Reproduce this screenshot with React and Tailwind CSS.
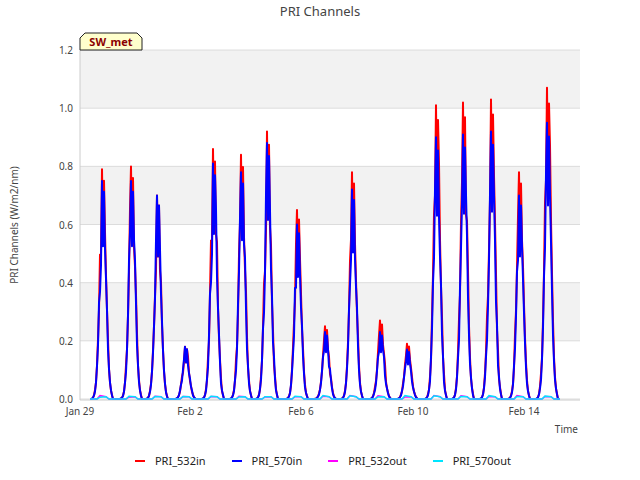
import React from "react";

const peaks = [
  [103, 0.79, 0.75], [132, 0.8, 0.75], [158, 0.7, 0.7], [186, 0.18, 0.18], [214, 0.86, 0.81],
  [242, 0.84, 0.78], [268, 0.92, 0.88], [298, 0.65, 0.6], [326, 0.25, 0.23], [353, 0.78, 0.72],
  [381, 0.27, 0.23], [408, 0.19, 0.17], [437, 1.01, 0.9], [464, 1.02, 0.91], [492, 1.03, 0.92],
  [520, 0.78, 0.7], [548, 1.07, 0.95],
];
const Y = (v) => 399 - v * 290.8;

function rand(s) {
  const x = Math.sin(s * 12.9898) * 43758.5453;
  return x - Math.floor(x);
}

function series(idx) {
  let d = "M90 399";
  peaks.forEach((p, i) => {
    const c = p[0], h = p[idx];
    d += ` L${c - 12} 399`;
    for (let k = -11; k <= 9; k++) {
      const t = k / 10;
      let v = h * Math.exp(-t * t * 5) * (0.75 + 0.25 * rand(i * 31 + k + idx));
      if (k === -1) v = h;
      if (k === 0) v = h * 0.7;
      if (k === 1) v = h * 0.95;
      d += ` L${c + k} ${Y(Math.max(0, v)).toFixed(1)}`;
    }
    d += ` L${c + 10} 399`;
  });
  return d + " L560 399";
}

function low(idx) {
  let d = "M90 399";
  peaks.forEach((p, i) => {
    const c = p[0];
    d += ` L${c - 6} 399 L${c - 3} ${Y(0.006 + 0.006 * rand(i + idx))} L${c + 3} ${Y(0.008)} L${c + 6} 399`;
  });
  return d + " L560 399";
}

export default function App() {
  const yt = [0, 0.2, 0.4, 0.6, 0.8, 1.0, 1.2];
  const xt = [[80, "Jan 29"], [190, "Feb 2"], [301, "Feb 6"], [413, "Feb 10"], [524, "Feb 14"]];
  return (
    <div className="w-[640px] h-[480px] bg-white flex flex-col font-['DejaVu_Sans',sans-serif]">
      <div className="h-[24px] flex items-center justify-center text-[13px] text-[#444]">PRI Channels</div>
      <svg width="640" height="416" viewBox="0 24 640 416" className="block">
        {[0, 1, 2, 3, 4, 5].map((i) => (
          <rect key={i} x="80" y={50 + i * 58.2} width="500" height="58.2" fill={i % 2 === 0 ? "#f2f2f2" : "#ffffff"} />
        ))}
        {yt.map((v) => (
          <g key={v}>
            <line x1="80" x2="580" y1={Y(v)} y2={Y(v)} stroke="#dcdcdc" strokeWidth="1" />
            <text x="73" y={Y(v) + 4} textAnchor="end" fontSize="10" fill="#444">{v.toFixed(1)}</text>
          </g>
        ))}
        <line x1="80" x2="80" y1="50" y2="400" stroke="#ccc" />
        <line x1="80" x2="580" y1="400" y2="400" stroke="#ccc" />
        {xt.map(([x, l]) => (
          <text key={l} x={x} y="415" textAnchor="middle" fontSize="10" fill="#444">{l}</text>
        ))}
        <text x="578" y="433" textAnchor="end" fontSize="10" fill="#444">Time</text>
        <text transform="translate(18 225) rotate(-90)" textAnchor="middle" fontSize="10" fill="#444">PRI Channels (W/m2/nm)</text>
        <path d={series(1)} fill="none" stroke="#ff0000" strokeWidth="2" strokeLinejoin="round" />
        <path d={series(2)} fill="none" stroke="#0000ff" strokeWidth="2" strokeLinejoin="round" />
        <path d={low(1)} fill="none" stroke="#ff00ff" strokeWidth="1.5" />
        <path d={low(2)} fill="none" stroke="#00e5ff" strokeWidth="1.5" />
        <path d="M80 50 L80 38 L85 33 L137 33 L142 38 L142 50 Z" fill="#ffffcc" stroke="#222" strokeWidth="1" />
        <text x="111" y="46" textAnchor="middle" fontSize="11" fontWeight="bold" fill="#8b0000">SW_met</text>
      </svg>
      <div className="flex justify-center items-center gap-[26px] text-[11px] text-[#222] mt-[13px] ml-[6px]">
        <div className="flex items-center gap-[10px]"><span className="w-[10px] h-[2px] bg-[#ff0000]" /><span>PRI_532in</span></div>
        <div className="flex items-center gap-[10px]"><span className="w-[10px] h-[2px] bg-[#0000ff]" /><span>PRI_570in</span></div>
        <div className="flex items-center gap-[10px]"><span className="w-[10px] h-[2px] bg-[#ff00ff]" /><span>PRI_532out</span></div>
        <div className="flex items-center gap-[10px]"><span className="w-[10px] h-[2px] bg-[#00e5ff]" /><span>PRI_570out</span></div>
      </div>
    </div>
  );
}
